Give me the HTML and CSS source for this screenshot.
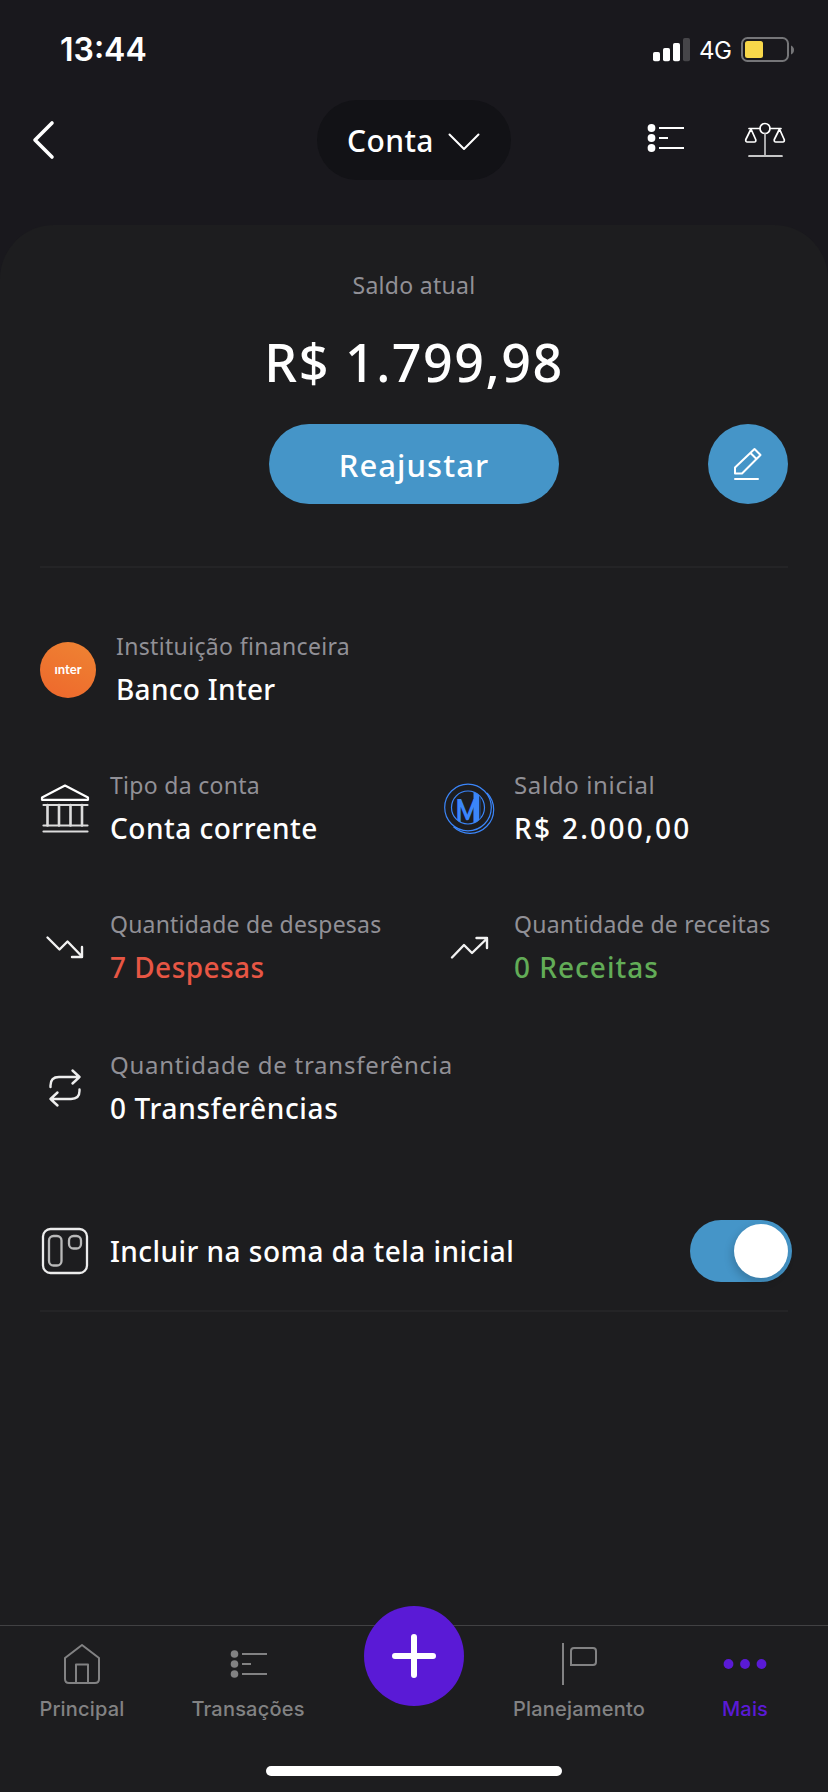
FILE: index.html
```html
<!DOCTYPE html>
<html lang="pt-BR">
<head>
<meta charset="utf-8">
<title>Conta</title>
<link rel="stylesheet" href="styles.css">
</head>
<body>
<div class="screen">
  <div class="status">
    <span class="clock">13:44</span>
    <div class="status-right">
      <svg width="38" height="24" viewBox="0 0 38 24" fill="#fff"><rect x="0" y="14" width="7" height="9.3" rx="1.8"/><rect x="10" y="10" width="7" height="13.3" rx="1.8"/><rect x="20" y="5" width="7" height="18.3" rx="1.8"/><rect x="30" y="0" width="7" height="23.3" rx="1.8" fill="#464549"/></svg>
      <span class="network">4G</span>
      <svg class="battery" width="54" height="26" viewBox="0 0 54 26"><rect x="1" y="1" width="46" height="23" rx="5.5" fill="none" stroke="#757578" stroke-width="2"/><rect x="4" y="4" width="18" height="17" rx="2.5" fill="#f8d74a"/><path d="M50 8.5v9q3-1.5 3-4.5t-3-4.500z" fill="#757578"/></svg>
    </div>
  </div>

  <header class="header">
    <svg width="24" height="42" viewBox="0 0 24 42" fill="none" stroke="#fff" stroke-width="3.6" stroke-linecap="round" stroke-linejoin="round"><path d="M21 4 4 21 21 38"/></svg>
    <div class="account-pill">
      <span class="pill-text">Conta</span>
      <svg width="32" height="18" viewBox="0 0 32 18" fill="none" stroke="#fff" stroke-width="2" stroke-linecap="round" stroke-linejoin="round"><path d="M1.500 1.500 16 16 30.500 1.500"/></svg>
    </div>
    <div class="header-actions">
      <svg width="38" height="30" viewBox="0 0 38 30" fill="#fff"><circle cx="4.500" cy="5" r="3.900"/><circle cx="4.500" cy="15" r="3.900"/><circle cx="4.500" cy="25" r="3.900"/><path d="M12 4h25v2H12zM12 14h9v2h-9zM12 24h25v2H12z"/></svg>
      <svg width="42" height="38" viewBox="0 0 42 38" fill="none" stroke="#fff" stroke-width="1.700" stroke-linecap="round" stroke-linejoin="round"><circle cx="21" cy="7.500" r="5"/><path d="M5 7.500h11M26 7.500h11M5 35h33M7 8 1.800 18.500q-.4 2.500 1.500 2.500h7q1.900 0 1.400-2.500zM35.500 8l-5.200 10.500q-.4 2.500 1.500 2.500h7q1.900 0 1.400-2.500z"/><path d="M21 12.500V35" stroke="#c4c4c6"/></svg>
    </div>
  </header>

  <main class="panel">
    <section class="balance">
      <div class="label t-saldo">Saldo atual</div>
      <div class="amount">R$ 1.799,98</div>
      <div class="balance-actions">
        <button class="adjust">Reajustar</button>
        <button class="edit">
          <svg width="30" height="34" viewBox="0 0 30 34" fill="none" stroke="#fff" stroke-width="2" stroke-linecap="round" stroke-linejoin="round"><path d="M2 20.500 21.500 2l6 6L9 26.500H2zM17.500 6l6 6M2 32h23"/></svg>
        </button>
      </div>
    </section>

    <section class="details">
      <div class="item bank">
        <div class="inter-logo">ınter</div>
        <div><div class="label t-inst">Instituição financeira</div><div class="value t-banco">Banco Inter</div></div>
      </div>
      <div class="item">
        <svg width="50" height="50" viewBox="0 0 50 50" fill="none" stroke="#fff" stroke-width="2.200" stroke-linejoin="round" stroke-linecap="round"><path d="M25 1.500 2 13.500v2.300h46v-2.300z"/><g stroke="#dcdcdc"><path d="M3.500 21h44M3.500 41.500h44M3.500 47.500h44"/><path d="M7.500 21v20.500M19 21v20.500M30.500 21v20.500M42 21v20.500" stroke-width="2.600"/></g></svg>
        <div><div class="label t-tipo">Tipo da conta</div><div class="value t-corrente">Conta corrente</div></div>
      </div>
      <div class="item">
        <svg class="coin" width="50" height="51" viewBox="0 0 50 51" fill="none" stroke="#3b86fa" stroke-width="1.200">
          <clipPath id="coin-face"><circle cx="24" cy="24.500" r="16.500"/></clipPath>
          <circle cx="24" cy="24.500" r="23.300"/><circle cx="24" cy="24.500" r="16.500"/>
          <path d="M43 10A23.800 23.800 0 0 1 9.500 43.800"/>
          <g clip-path="url(#coin-face)">
            <path d="M29.500 8H35v32h-5.500z" fill="#3b86fa" stroke="none"/>
            <path d="M36 12v25" stroke="#1f4a8c"/>
            <text transform="translate(23.500 40) scale(1 1.280)" class="coin-letter" text-anchor="middle">M</text>
          </g>
        </svg>
        <div><div class="label t-inicial">Saldo inicial</div><div class="value t-dois">R$ 2.000,00</div></div>
      </div>
      <div class="item">
        <svg width="50" height="50" viewBox="0 0 50 50" fill="none" stroke="#f2f2f2" stroke-width="2.400" stroke-linejoin="round" stroke-linecap="round"><path d="M7.500 14.500 19.500 26.500 27.500 18.500 42 33.500M42 24v10H32"/></svg>
        <div><div class="label t-qdesp">Quantidade de despesas</div><div class="value red t-desp">7 Despesas</div></div>
      </div>
      <div class="item">
        <svg width="50" height="50" viewBox="0 0 50 50" fill="none" stroke="#f2f2f2" stroke-width="2.400" stroke-linejoin="round" stroke-linecap="round"><path d="M8 34.500 20 22 28 30 43 15.500M32.500 15H43V25"/></svg>
        <div><div class="label t-qrec">Quantidade de receitas</div><div class="value green t-rec">0 Receitas</div></div>
      </div>
      <div class="item transfer">
        <svg width="50" height="50" viewBox="0 0 50 50" fill="none" stroke="#eee" stroke-width="2.400" stroke-linejoin="round" stroke-linecap="round"><path d="M10.500 23V21.500q0-8.500 8.500-8.500h20.500M32.500 6.500l7 6.500-7 6.500M39.500 25.500V27q0 8-8.500 8H10.500M17.500 28.500l-7 6.500 7 6.500"/></svg>
        <div><div class="label t-qtra">Quantidade de transferência</div><div class="value t-tra">0 Transferências</div></div>
      </div>
    </section>

    <section class="include">
      <svg width="50" height="50" viewBox="0 0 50 50" fill="none" stroke="#ececec" stroke-width="2.300"><rect x="3" y="3" width="44" height="44" rx="7.500"/><rect x="9" y="10" width="12.500" height="29.500" rx="4.500" stroke="#b9b9b9"/><rect x="29" y="10" width="12" height="12.500" rx="4.500" stroke="#b9b9b9"/></svg>
      <span class="value t-incluir">Incluir na soma da tela inicial</span>
      <div class="toggle"><div class="knob"></div></div>
    </section>
  </main>

  <footer class="footer">
    <nav class="tabs">
      <div class="tab">
        <svg width="44" height="44" viewBox="0 0 44 44" fill="none" stroke="#828283" stroke-width="2" stroke-linejoin="round"><path d="M22 3 39 16V37q0 4-4 4H9q-4 0-4-4V16z"/><path d="M16 41V22.500h12V41"/></svg>
        <span>Principal</span>
      </div>
      <div class="tab">
        <svg width="44" height="44" viewBox="0 0 44 44" fill="#828283"><circle cx="8.500" cy="12" r="3.800"/><circle cx="8.500" cy="22" r="3.800"/><circle cx="8.500" cy="32" r="3.800"/><path d="M16 11h25v2H16zM16 21h9v2h-9zM16 31h25v2H16z"/></svg>
        <span>Transações</span>
      </div>
      <div class="fab"><svg width="44" height="44" viewBox="0 0 44 44" stroke="#fff" stroke-width="6" stroke-linecap="round"><path d="M22 3v38M3 22h38"/></svg></div>
      <div class="tab">
        <svg width="44" height="44" viewBox="0 0 44 44" fill="none" stroke="#828283" stroke-width="2"><path d="M6 1v42M14 23V9q0-3 3-3h19q3 0 3 3v11q0 3-3 3z"/></svg>
        <span>Planejamento</span>
      </div>
      <div class="tab active">
        <svg width="44" height="44" viewBox="0 0 44 44" fill="#5a1ad6"><circle cx="5.500" cy="22" r="4.900"/><circle cx="22" cy="22" r="4.900"/><circle cx="38.500" cy="22" r="4.900"/></svg>
        <span>Mais</span>
      </div>
    </nav>
    <div class="home-bar"></div>
  </footer>
</div>
</body>
</html>
```
FILE: styles.css
```css
* { box-sizing: border-box; }
body { margin: 0; background: #19181d; }
svg { display: block; flex: none; }
button { border: 0; padding: 0; }
.screen {
  width: 828px; height: 1792px; overflow: hidden;
  display: flex; flex-direction: column;
  color: #fff; font-family: "Noto Sans", sans-serif; font-weight: 500;
  white-space: nowrap;
}
.status {
  height: 100px; padding: 0 33px 0 60px;
  display: flex; align-items: center; justify-content: space-between;
  font-family: Inter, sans-serif;
}
.clock { font-size: 32px; font-weight: 600; line-height: 40px; }
.status-right { display: flex; align-items: center; }
.network { width: 32px; margin: 1px 10px 0 8px; font-size: 24px; font-weight: 400; letter-spacing: -.5px; }
.header {
  height: 125px; padding: 0 42px 45px 31px;
  display: grid; grid-template-columns: 1fr 194px 1fr; align-items: center;
}
.account-pill {
  width: 194px; height: 80px; border-radius: 40px; background: #121216; margin-left: 5px;
  display: flex; align-items: center; justify-content: center; gap: 13px;
}
.pill-text { width: 88px; margin-top: 2px; font-size: 30px; line-height: 40px; letter-spacing: .4px; }
.account-pill svg { margin-top: 4px; }
.header-actions { display: flex; justify-content: flex-end; align-items: center; gap: 59px; }
.header-actions svg:first-child { margin-top: -4px; }
.panel {
  height: 1400px; flex: none; padding: 44px 40px 0;
  background: #1d1d1f; border-radius: 54px 54px 0 0;
}
.label { font-size: 23px; line-height: 32px; color: #919096; font-weight: 400; }
.value { font-size: 28px; line-height: 40px; }
.red { color: #e75644; }
.green { color: #62ac57; }
.t-saldo { letter-spacing: .3px; }
.t-inst { letter-spacing: .34px; }
.t-banco { letter-spacing: .3px; }
.t-tipo { letter-spacing: .3px; }
.t-corrente { letter-spacing: .5px; }
.t-inicial { font-size: 24px; letter-spacing: .65px; }
.t-dois { letter-spacing: 2.3px; }
.t-qdesp { letter-spacing: .2px; }
.t-desp { letter-spacing: .45px; }
.t-qrec { letter-spacing: .25px; }
.t-rec { letter-spacing: 1px; }
.t-qtra { font-size: 24px; letter-spacing: .75px; }
.t-tra { letter-spacing: .65px; }
.t-incluir { letter-spacing: .45px; }
.balance { height: 299px; border-bottom: 2px solid #242426; text-align: center; }
.amount { font-size: 52px; line-height: 64px; margin-top: 29px; letter-spacing: 1.5px; }
.balance-actions {
  margin-top: 30px; display: grid; grid-template-columns: 1fr 290px 1fr; align-items: center;
}
.adjust {
  grid-column: 2; height: 80px; padding-top: 2px; border-radius: 40px; background: #4595c8;
  color: #fff; font: 500 31px/40px "Noto Sans", sans-serif; letter-spacing: 1.1px;
}
.edit {
  justify-self: end; width: 80px; height: 80px; border-radius: 50%; background: #4595c8;
  display: grid; place-items: center;
}
.details {
  margin-top: 62px; display: grid; grid-template-columns: 404px 1fr; row-gap: 60px;
}
.item { display: flex; align-items: center; gap: 20px; height: 79px; }
.item .value { margin-top: 7px; }
.bank { grid-column: 1 / 3; }
.inter-logo {
  width: 56px; height: 56px; border-radius: 50%;
  background: linear-gradient(25deg, #ee672c, #ee8433);
  font: 700 13px/55px Lato, sans-serif; text-align: center;
}
.coin { overflow: visible; }
.coin-letter { font: 900 25px Lato, sans-serif; fill: #3b86fa; stroke: none; }
.transfer { grid-column: 1 / 3; margin-top: 2px; }
.include {
  margin-top: 77px; padding: 15px 0 28px; height: 107px; border-bottom: 2px solid #242426;
  display: flex; align-items: center; gap: 20px;
}
.toggle {
  width: 102px; height: 62px; border-radius: 31px; background: #4595c8;
  margin: 0 -4px 0 auto; padding: 4px; display: flex; justify-content: flex-end;
}
.knob { width: 54px; height: 54px; border-radius: 50%; background: #fff; box-shadow: -2px 4px 9px rgba(0,0,0,.18); }
.footer { flex: 1; background: #1d1d1f; }
.tabs {
  height: 141px; border-top: 1px solid #414143;
  display: grid; grid-template-columns: 164px 168px 164px 166px 166px;
  font: 500 20px/26px Inter, sans-serif; letter-spacing: .2px; color: #828283;
}
.tab { display: flex; flex-direction: column; align-items: center; padding-top: 16px; gap: 10px; }
.active { color: #5a1ad6; }
.fab {
  width: 100px; height: 100px; border-radius: 50%; background: #5a1ad6;
  justify-self: center; margin-top: -20px; display: grid; place-items: center;
}
.home-bar { width: 296px; height: 10px; border-radius: 5px; background: #fff; margin: 0 auto; }
```
